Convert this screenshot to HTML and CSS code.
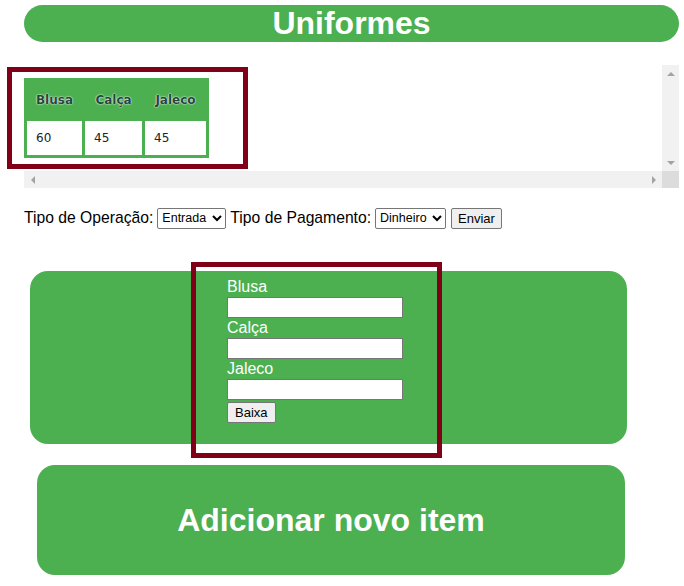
FILE: index.html
```html
<!DOCTYPE html>
<html lang="pt-BR">
<head>
<meta charset="utf-8">
<title>Uniformes</title>
<link rel="stylesheet" href="styles.css">
</head>
<body>
<header class="title-bar">
  <h1 class="title">Uniformes</h1>
</header>

<div class="stock-scroll">
  <div class="stock-view">
    <table class="stock-table">
      <thead>
        <tr><th class="c1">Blusa</th><th class="c2">Calça</th><th class="c3">Jaleco</th></tr>
      </thead>
      <tbody>
        <tr><td>60</td><td>45</td><td>45</td></tr>
      </tbody>
    </table>
  </div>
  <div class="vbar">
    <span class="sb-btn"><i class="arr arr-up"></i></span>
    <span class="sb-btn"><i class="arr arr-down"></i></span>
  </div>
  <div class="hbar">
    <span class="sb-btn"><i class="arr arr-left"></i></span>
    <span class="sb-btn"><i class="arr arr-right"></i></span>
  </div>
  <div class="corner"></div>
</div>

<form class="op-row">
  <label>Tipo de Operação:</label>
  <select class="ctl sel sel-op"><option>Entrada</option><option>Saída</option></select>
  <label>Tipo de Pagamento:</label>
  <select class="ctl sel sel-pay"><option>Dinheiro</option><option>Cartão</option></select>
  <button type="button" class="ctl btn send">Enviar</button>
</form>

<section class="panel">
  <form class="item-form">
    <label class="field-label">Blusa</label>
    <input class="field" type="text">
    <label class="field-label">Calça</label>
    <input class="field" type="text">
    <label class="field-label">Jaleco</label>
    <input class="field" type="text">
    <button type="button" class="ctl btn baixa">Baixa</button>
  </form>
</section>

<section class="add-panel">
  <h2 class="add-title">Adicionar novo item</h2>
</section>

<div class="mark mark-table"></div>
<div class="mark mark-form"></div>
</body>
</html>
```

FILE: styles.css
```css
html, body {
  margin: 0;
  padding: 0;
  background: #ffffff;
}
body {
  font-family: "Liberation Sans", Arial, sans-serif;
  color: #000;
  position: relative;
  width: 684px;
  height: 586px;
  overflow: hidden;
}

.title-bar {
  margin: 5px 5px 0 24px;
  height: 37px;
  background: #4caf50;
  border-radius: 19px;
  display: flex;
  align-items: center;
  justify-content: center;
}
.title {
  margin: 0;
  font-size: 32px;
  font-weight: bold;
  color: #fff;
  line-height: 37px;
}

/* table box with classic scrollbars */
.stock-scroll {
  margin: 23px 0 0 24px;
  width: 655px;
  height: 123px;
  display: grid;
  grid-template-columns: 1fr 17px;
  grid-template-rows: 1fr 17px;
  background: #fff;
}
.stock-view {
  padding-top: 13px;
  overflow: hidden;
}
.vbar {
  background: #f1f1f1;
  display: flex;
  flex-direction: column;
  justify-content: space-between;
}
.hbar {
  background: #f1f1f1;
  display: flex;
  justify-content: space-between;
}
.corner {
  background: #dcdcdc;
}
.sb-btn {
  width: 17px;
  height: 17px;
  display: flex;
  align-items: center;
  justify-content: center;
}
.arr {
  width: 0;
  height: 0;
  display: block;
}
.arr-up {
  border-left: 4px solid transparent;
  border-right: 4px solid transparent;
  border-bottom: 4px solid #a3a3a3;
}
.arr-down {
  border-left: 4px solid transparent;
  border-right: 4px solid transparent;
  border-top: 4px solid #a3a3a3;
}
.arr-left {
  border-top: 4px solid transparent;
  border-bottom: 4px solid transparent;
  border-right: 4px solid #a3a3a3;
}
.arr-right {
  border-top: 4px solid transparent;
  border-bottom: 4px solid transparent;
  border-left: 4px solid #a3a3a3;
}

.stock-table {
  background: #4caf50;
  border-spacing: 3px;
  border-collapse: separate;
  font-family: "DejaVu Sans", Verdana, sans-serif;
  font-size: 12px;
}
.stock-table th {
  height: 37px;
  padding: 0;
  box-sizing: border-box;
  text-align: center;
  font-weight: bold;
  color: #23473a;
  text-shadow: 0 0 2px #fff, 0 0 1px #fff;
}
.stock-table .c1 { width: 55px; }
.stock-table .c2 { width: 57px; }
.stock-table .c3 { width: 61px; }
.stock-table td {
  height: 34px;
  padding: 0 0 0 9px;
  box-sizing: border-box;
  background: #fff;
  color: #222;
}

.op-row {
  margin: 19px 0 0 24px;
  font-size: 15.7px;
  height: 22px;
  display: flex;
  align-items: center;
  gap: 4px;
}
.ctl {
  font-family: "Liberation Sans", Arial, sans-serif;
  font-size: 13px;
  height: 21px;
  box-sizing: border-box;
  border: 1px solid #767676;
  border-radius: 2px;
  background: #fff;
  color: #000;
  padding: 0 1px;
}
.sel {
  font-size: 12.5px;
  padding: 0;
}
.sel-op { width: 69px; }
.sel-pay { width: 71px; }
.send {
  margin-left: 1px;
}
.btn {
  background: #efefef;
  padding: 0 6px;
}

.panel {
  margin: 42px 0 0 30px;
  width: 597px;
  height: 173px;
  box-sizing: border-box;
  padding: 6px 0 0 197px;
  background: #4caf50;
  border-radius: 18px;
}
.item-form {
  width: 200px;
  display: flex;
  flex-direction: column;
  align-items: flex-start;
}
.field-label {
  color: #fff;
  font-size: 16px;
  line-height: 20px;
  height: 20px;
}
.field {
  width: 176px;
  height: 21px;
  box-sizing: border-box;
  border: 1px solid #767676;
  margin: 0;
  background: #fff;
}
.baixa {
  margin-top: 2px;
  padding: 0 7px;
}

.add-panel {
  margin: 21px 0 0 37px;
  width: 588px;
  height: 110px;
  background: #4caf50;
  border-radius: 18px;
  display: flex;
  align-items: center;
  justify-content: center;
}
.add-title {
  margin: 0;
  font-size: 32px;
  font-weight: bold;
  color: #fff;
}

.mark {
  position: absolute;
  border: 5px solid #800018;
  box-sizing: border-box;
  pointer-events: none;
}
.mark-table {
  left: 7px;
  top: 67px;
  width: 241px;
  height: 102px;
}
.mark-form {
  left: 191px;
  top: 262px;
  width: 251px;
  height: 196px;
}
```
